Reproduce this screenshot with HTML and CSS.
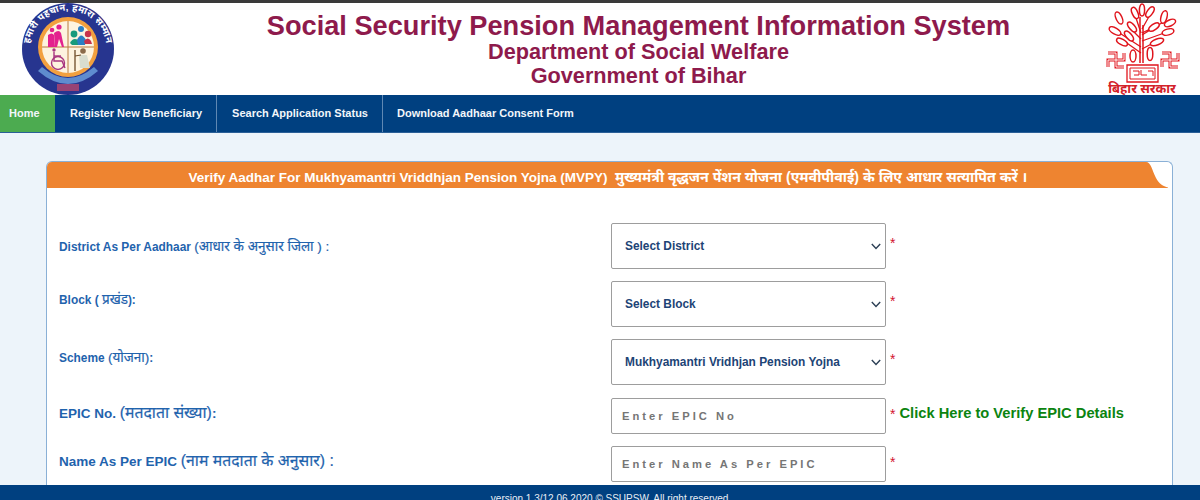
FILE: index.html
```html
<!DOCTYPE html>
<html lang="en">
<head>
<meta charset="utf-8">
<title>Social Security Pension Management Information System</title>
<link rel="stylesheet" href="styles.css">
</head>
<body>
<div class="page">
  <header class="masthead">
    <svg class="logo" viewBox="0 0 92 92" width="92" height="92" aria-label="Logo">
      <defs><path id="arc" d="M9.4 58 A38.5 38.5 0 1 1 82.6 58"/></defs>
      <circle cx="46" cy="46" r="46" fill="#27358f"/>
      <circle cx="46" cy="44" r="30" fill="#f2a03f"/>
      <path d="M20 64 Q46 86 72 64 L76 68 Q46 94 16 68Z" fill="#5f8ccf"/>
      <circle cx="46" cy="44" r="26" fill="#fdf3df"/>
      <path d="M46 18V70M20 44H72" stroke="#b87a3e" stroke-width="1"/>
      <text class="logo-arc" fill="#fff" text-anchor="middle"><textPath href="#arc" startOffset="50%">हमारी पहचान, हमारा सम्मान</textPath></text>
      <g fill="#e3228e">
        <circle cx="37" cy="24" r="2.6"/><path d="M32 30q5-4 7 0l3 14h-2l-3-8-2 8h-2z"/>
        <circle cx="30" cy="27" r="2.3"/><path d="M26 32q4-3 6 0l1 12h-7z"/>
      </g>
      <g>
        <circle cx="52" cy="31" r="3.4" fill="#189a7c"/><circle cx="59" cy="26" r="3" fill="#2b7fc4"/><circle cx="66" cy="31" r="3.2" fill="#c8324b"/>
        <path d="M48 40q3-6 8-3l3 5h-9z" fill="#189a7c"/><path d="M55 37q4-9 9 0l-1 5h-7z" fill="#2b7fc4"/><path d="M62 38q4-5 7 0l1 3h-7z" fill="#c8324b"/>
      </g>
      <g fill="none" stroke="#a8357f" stroke-width="1.4">
        <circle cx="36" cy="60" r="6.5"/><path d="M32 49v9h8l3 7"/><path d="M32 53h7"/>
      </g>
      <circle cx="32" cy="47" r="1.7" fill="#a8357f"/>
      <g>
        <circle cx="61" cy="48" r="2.8" fill="#8a6a4a"/><path d="M57 52h8l3 13h-10z" fill="#d9ddcf"/><path d="M53 47v21" stroke="#6d4b27" stroke-width="1.3"/><path d="M53 53l6-1" stroke="#6d4b27"/>
      </g>
      <path d="M35 81h22v7H35z" fill="#c84a6a" opacity=".7"/>
    </svg>
    <div class="titles">
      <h1>Social Security Pension Management Information System</h1>
      <h2>Department of Social Welfare</h2>
      <h2>Government of Bihar</h2>
    </div>
    <svg class="emblem" viewBox="0 0 74 92" width="74" height="92" aria-label="Bihar Sarkar">
      <g fill="#fff" stroke="#e0141c" stroke-width="1.5">
        <path d="M35 60V14M38 60V22" fill="none"/>
        <path d="M36 50L19 38M36 44L13 29M36 36L24 24M36 30L30 12M37 46L52 38M37 38L62 29M37 32L60 18M37 26L46 10M37 30L49 24" fill="none" stroke-width="1.3"/>
        <ellipse cx="37" cy="7" rx="2.6" ry="6"/>
        <ellipse cx="30" cy="10" rx="2.8" ry="6" transform="rotate(-25 30 10)"/>
        <ellipse cx="45" cy="9" rx="2.8" ry="6" transform="rotate(35 45 9)"/>
        <ellipse cx="14" cy="15" rx="3" ry="6.5" transform="rotate(-25 14 15)"/>
        <ellipse cx="59" cy="14" rx="3" ry="6.5" transform="rotate(15 59 14)"/>
        <ellipse cx="10" cy="28" rx="3" ry="6.5" transform="rotate(-60 10 28)"/>
        <ellipse cx="65" cy="20" rx="3" ry="6" transform="rotate(65 65 20)"/>
        <ellipse cx="63" cy="29" rx="3" ry="6" transform="rotate(75 63 29)"/>
        <ellipse cx="17" cy="39" rx="2.8" ry="6" transform="rotate(-60 17 39)"/>
        <ellipse cx="24" cy="33" rx="2.8" ry="6" transform="rotate(-40 24 33)"/>
        <ellipse cx="52" cy="39" rx="3" ry="7" transform="rotate(70 52 39)"/>
        <ellipse cx="49" cy="24" rx="2.8" ry="6" transform="rotate(55 49 24)"/>
        <ellipse cx="27" cy="24" rx="2.8" ry="6" transform="rotate(-40 27 24)"/>
        <ellipse cx="28" cy="53" rx="3" ry="6"/>
        <ellipse cx="45" cy="51" rx="2.8" ry="6.5"/>
      </g>
      <g fill="none" stroke="#e0141c">
        <g stroke-width="3"><path d="M3 50H11V64H19M3 64V57H19V50"/><path d="M57 50H65V64H73M57 64V57H73V50"/></g>
        <g stroke="#fff" stroke-width="1"><path d="M3 50H11V64H19M3 64V57H19V50"/><path d="M57 50H65V64H73M57 64V57H73V50"/></g>
        <path d="M22 62H53V79H22Z" stroke-width="1.3"/>
        <path d="M25 65H50V76H25Z" stroke-width="1"/>
        <path d="M28 68h6v4h-5M36 67v5h6M43 68h5v5" stroke-width="1"/>
      </g>
      <text class="emblem-text" x="37" y="90" text-anchor="middle" fill="#d3212a">बिहार सरकार</text>
    </svg>
  </header>

  <nav class="nav">
    <a class="nav-item active" href="#">Home</a>
    <a class="nav-item" href="#">Register New Beneficiary</a>
    <a class="nav-item" href="#">Search Application Status</a>
    <a class="nav-item plain" href="#">Download Aadhaar Consent Form</a>
  </nav>

  <main class="main">
    <section class="panel">
      <div class="panel-head">
        <div class="panel-title">Verify Aadhar For Mukhyamantri Vriddhjan Pension Yojna (MVPY) &nbsp;<span class="hi-title">मुख्यमंत्री वृद्धजन पेंशन योजना (एमवीपीवाई) के लिए आधार सत्यापित करें ।</span></div>
        <svg class="panel-tail" viewBox="0 0 27 26" width="27" height="26" aria-hidden="true"><path d="M0 0H5C10 0 11 8 15 16C18 22 22 24 27 25.5V26H0Z" fill="#ee8430"/></svg>
      </div>
      <form class="form">
        <label class="label nudge-a">District As Per Aadhaar <span class="hi">(आधार के अनुसार जिला ) :</span></label>
        <div class="control"><div class="select-wrap"><select class="field select"><option>Select District</option></select><svg class="chev" viewBox="0 0 10 7" width="10" height="7"><path d="M.8 1L5 5.5L9.2 1" fill="none" stroke="#2b3f55" stroke-width="1.4"/></svg></div><span class="req">*</span></div>

        <label class="label nudge-b">Block ( <span class="hi">प्रखंड</span>):</label>
        <div class="control"><div class="select-wrap"><select class="field select"><option>Select Block</option></select><svg class="chev" viewBox="0 0 10 7" width="10" height="7"><path d="M.8 1L5 5.5L9.2 1" fill="none" stroke="#2b3f55" stroke-width="1.4"/></svg></div><span class="req">*</span></div>

        <label class="label nudge-b">Scheme <span class="hi">(योजना)</span>:</label>
        <div class="control"><div class="select-wrap"><select class="field select"><option>Mukhyamantri Vridhjan Pension Yojna</option></select><svg class="chev" viewBox="0 0 10 7" width="10" height="7"><path d="M.8 1L5 5.5L9.2 1" fill="none" stroke="#2b3f55" stroke-width="1.4"/></svg></div><span class="req">*</span></div>

        <label class="label large nudge-c">EPIC No. <span class="hi">(मतदाता संख्या)</span>:</label>
        <div class="control input-row"><input class="field input" placeholder="Enter EPIC No"><span class="req">*</span><a class="verify" href="#">Click Here to Verify EPIC Details</a></div>

        <label class="label large nudge-c">Name As Per EPIC <span class="hi">(नाम मतदाता के अनुसार) :</span></label>
        <div class="control"><input class="field input" placeholder="Enter Name As Per EPIC"><span class="req">*</span></div>
      </form>
    </section>
  </main>

  <footer class="footer">version 1.3/12.06.2020 © SSUPSW. All right reserved.</footer>
</div>
</body>
</html>
```

FILE: styles.css
```css
* { box-sizing: border-box; }
html, body { margin: 0; height: 100%; overflow: hidden; }
body { font-family: "Liberation Sans", "Noto Sans", "Noto Sans Devanagari", "Lohit Devanagari", sans-serif; background: #edf4fa; }
.page { height: 500px; display: flex; flex-direction: column; }

.masthead { flex: none; height: 95px; background: #fff; border-top: 3px solid #3a3a3a; display: flex; align-items: flex-start; padding-left: 22px; padding-right: 21px; }
.logo { flex: none; }
.logo-arc { font: bold 9.5px "Liberation Sans", "Noto Sans", sans-serif; letter-spacing: .3px; }
.emblem { flex: none; overflow: visible; }
.emblem-text { font: 700 13px "Liberation Serif", "Noto Sans", serif; }
.titles { flex: 1; text-align: center; color: #8e1a4c; padding-top: 8px; padding-left: 58px; }
.titles h1 { margin: 0; font-size: 27.2px; line-height: 29px; font-weight: 700; white-space: nowrap; }
.titles h2 { margin: 0; font-size: 21.7px; line-height: 24px; font-weight: 700; }

.nav { flex: none; height: 38px; padding-bottom: 2px; background: #004080; display: flex; align-items: stretch; border-bottom: 1px solid #2a5f97; }
.nav-item { display: flex; align-items: center; padding: 0 14px 0 15px; color: #f2f6fa; font-size: 11px; font-weight: 700; text-decoration: none; border-right: 1px solid #5f88b3; margin-bottom: -2px; padding-bottom: 2px; white-space: nowrap; }
.nav-item.active { width: 55px; padding-left: 9px; padding-right: 9px; background: #4cab50; border-right: 0; }
.nav-item.plain { border-right: 0; padding-left: 14px; }

.main { flex: 1; min-height: 0; overflow: hidden; padding: 28px 27px 0 46px; }
.panel { background: #fff; border: 1px solid #8ab0d6; border-bottom: 0; border-radius: 6px 6px 0 0; height: 400px; }
.panel-head { display: flex; height: 26px; margin-right: 4px; border-top-left-radius: 5px; overflow: hidden; }
.panel-title { flex: 1; background: #ee8430; color: #fff; font-size: 13.5px; font-weight: 700; line-height: 30px; text-align: center; padding-left: 28px; white-space: nowrap; }
.hi-title { font-size: 14.2px; }
.panel-tail { flex: none; display: block; }

.form { display: grid; grid-template-columns: 552px 1fr; row-gap: 12px; padding: 35px 0 0 12px; }
.label { align-self: center; color: #1f63ad; font-size: 11.9px; font-weight: 700; }
.label.large { font-size: 13.5px; }
.hi { font-size: 13.5px; font-weight: 400; -webkit-text-stroke: .2px #1f63ad; }
.large .hi { font-size: 15.8px; }
.nudge-a { margin-bottom: 0; }
.nudge-b { margin-bottom: 10px; }
.nudge-c { margin-bottom: 8px; }
.control { display: flex; align-items: flex-start; }
.input-row { margin-top: 1px; }
.select-wrap { position: relative; flex: none; }
.field { display: block; width: 275px; background: #fff; border: 1px solid #9d9d9d; border-radius: 2px; font-family: "Liberation Sans", sans-serif; font-weight: 700; outline: 0; }
.select { height: 46px; padding: 0 30px 0 13px; appearance: none; color: #1d4476; font-size: 11.9px; }
.input { flex: none; height: 36px; padding: 0 10px; font-size: 11.2px; letter-spacing: 3px; color: #555; }
.input::placeholder { color: #757575; opacity: 1; }
.chev { position: absolute; right: 5px; top: 20px; }
.req { margin-left: 4px; color: #d2122e; font-size: 14px; line-height: 40px; }
.input + .req { line-height: 32px; }
.verify { margin-left: 4px; color: #0c8410; font-size: 14.7px; font-weight: 700; text-decoration: none; line-height: 30px; white-space: nowrap; }

.footer { flex: none; height: 15px; padding-left: 22px; background: #004080; color: #e8eef5; font-size: 10px; line-height: 28px; text-align: center; overflow: hidden; }
```
